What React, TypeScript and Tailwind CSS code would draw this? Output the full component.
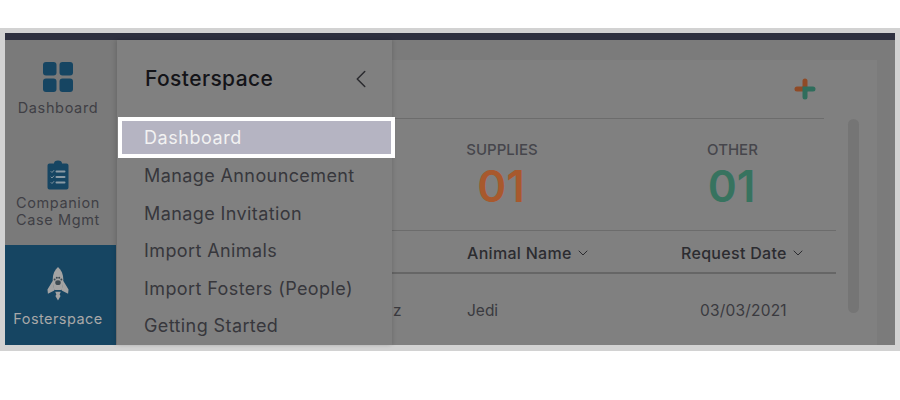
import { ChevronDown, ChevronLeft } from 'lucide-react';

const FONT = 'font-["Inter","Noto_Sans",sans-serif]';

const MENU = ['Manage Announcement', 'Manage Invitation', 'Import Animals', 'Import Fosters (People)', 'Getting Started'];

function GridIcon() {
  return (
    <svg width="30" height="30" viewBox="0 0 30 30" fill="#164562">
      <rect x="0" y="0" width="13.5" height="13.5" rx="3" />
      <rect x="16.5" y="0" width="13.5" height="13.5" rx="3" />
      <rect x="0" y="16.5" width="13.5" height="13.5" rx="3" />
      <rect x="16.5" y="16.5" width="13.5" height="13.5" rx="3" />
    </svg>
  );
}

function ClipboardIcon() {
  return (
    <svg width="22" height="30" viewBox="0 0 22 30">
      <path d="M2.5 3.5h4.5a4 3 0 0 1 8 0h4.5a2 2 0 0 1 2 2v22a2 2 0 0 1-2 2h-17a2 2 0 0 1-2-2v-22a2 2 0 0 1 2-2z" fill="#164562" />
      <g stroke="#8a9aa4" strokeLinecap="round">
        <path d="M9.5 11.5h8M9.5 17h8M9.5 22.5h8" strokeWidth="2" />
        <path d="M4 11.5l1 1 1.8-2M4 17l1 1 1.8-2M4 22.5l1 1 1.8-2" strokeWidth="0.9" fill="none" />
      </g>
    </svg>
  );
}

function RocketIcon() {
  return (
    <svg width="22" height="36" viewBox="0 0 24 37">
      <path d="M12 0c3.6 3 5.8 8 5.8 13.5 0 4-.7 8-1.8 11.5H8C6.900 21.500 6.200 17.500 6.200 13.500 6.200 8 8.400 3 12 0z" fill="#a3a3a3" />
      <path d="M6.300 15L0.500 24.500 1 29l7-3.500zM17.700 15l5.800 9.500L23 29l-7-3.500z" fill="#a3a3a3" />
      <path d="M9 27h6l-1.200 3 1 1.500-2.800 5-2.800-5 1-1.500z" fill="#a3a3a3" />
      <g fill="#3d4a52">
        <ellipse cx="12" cy="17" rx="3" ry="2.500" />
        <circle cx="8.300" cy="13.700" r="1.100" />
        <circle cx="10.700" cy="11.800" r="1.100" />
        <circle cx="13.300" cy="11.800" r="1.100" />
        <circle cx="15.700" cy="13.700" r="1.100" />
      </g>
    </svg>
  );
}

function PlusIcon() {
  return (
    <svg width="22" height="22" viewBox="0 0 22 22" fill="none" strokeWidth="5" strokeLinecap="round">
      <path d="M3 11h8V3" stroke="#8f4a26" />
      <path d="M19 11h-8v8" stroke="#2f6d5c" />
    </svg>
  );
}

export default function App() {
  return (
    <div className={`h-[400px] w-[900px] overflow-hidden bg-white pt-[28px] ${FONT}`}>
      <div className="flex h-[323px] flex-col border-x-[5px] border-t-[5px] border-b-[6px] border-[#d2d2d2] bg-[#7b7b7b]">
        <div className="h-[7px] shrink-0 bg-[#2e303f]" />
        <div className="flex min-h-0 flex-1">
          {/* icon rail */}
          <div className="flex w-[112px] shrink-0 flex-col bg-[#7a7a7a] text-center text-[14.500px] leading-[17px] text-[#3f3f45]">
            <div className="flex h-[100px] flex-col items-center pr-[6px] pt-[22px]">
              <GridIcon />
              <span className="mt-[7px] tracking-[0.65px]">Dashboard</span>
            </div>
            <div className="flex h-[105px] flex-col items-center pr-[6px] pt-[20px]">
              <ClipboardIcon />
              <span className="mt-[4px] tracking-[0.6px]">Companion<br />Case Mgmt</span>
            </div>
            <div className="mr-[1px] flex flex-1 flex-col items-center bg-[#164562] pr-[5px] pt-[21px] text-[#a8a8a8]">
              <RocketIcon />
              <span className="mt-[8px] tracking-[0.45px]">Fosterspace</span>
            </div>
          </div>

          {/* flyout menu */}
          <div className="relative z-10 w-[275px] shrink-0 bg-[#808080] shadow-[-2px_0_4px_rgba(0,0,0,0.12),2px_0_3px_rgba(0,0,0,0.08)]">
            <div className="flex h-[77px] items-center justify-between pl-[28px] pr-[16px]">
              <span className="text-[21px] font-medium tracking-[0.4px] text-[#141418]">Fosterspace</span>
              <ChevronLeft size={30} strokeWidth={1.2} color="#2a2a2e" />
            </div>
            <div className="-mr-[3px] ml-[1px] flex h-[41px] items-center border-[4px] border-white bg-[#b5b4c2] pl-[22px] text-[18px] tracking-[0.55px] text-[#f2f2f2]">
              Dashboard
            </div>
            <div className="-mt-[1px]">
              {MENU.map((m) => (
                <div key={m} className="flex h-[37.500px] items-center pl-[27px] text-[18px] tracking-[0.4px] text-[#37373c]">
                  {m}
                </div>
              ))}
            </div>
          </div>

          {/* page behind the overlay */}
          <div className="relative min-w-0 flex-1 overflow-hidden pr-[18px] pt-[20px]">
            <div className="h-full bg-[#808080]">
              <div className="flex h-[59px] w-[432px] items-center justify-end border-b border-[#6c6c6c] pr-[8px]">
                <PlusIcon />
              </div>
              <div className="flex h-[112px] w-[444px] border-b border-[#6c6c6c] pt-[22px] text-center">
                <div className="w-[218px] pl-[5px]">
                  <div className="text-[15px] font-medium leading-[18px] text-[#46464c]">SUPPLIES</div>
                  <div className="mt-[2px] pr-[2px] text-[44px] font-semibold leading-[50px] text-[#a8592d]">01</div>
                </div>
                <div className="w-[232px] pl-[22px]">
                  <div className="text-[15px] font-medium leading-[18px] text-[#46464c]">OTHER</div>
                  <div className="mt-[2px] pr-[2px] text-[44px] font-semibold leading-[50px] text-[#37735f]">01</div>
                </div>
              </div>
              <div className="flex h-[43px] w-[444px] items-center border-b-2 border-[#666666] pt-[2px] text-[16px] font-medium tracking-[0.3px] text-[#2c2c30]">
                <div className="flex w-[289px] items-center gap-[3px] pl-[75px]">
                  Animal Name <ChevronDown size={16} strokeWidth={1.5} />
                </div>
                <div className="flex items-center gap-[3px]">
                  Request Date <ChevronDown size={16} strokeWidth={1.5} />
                </div>
              </div>
              <div className="flex h-[70px] w-[444px] items-center pt-[4px] text-[15.500px] text-[#3a3a3f]">
                <span className="w-[75px] pl-[1px]">z</span>
                <span className="w-[233px]">Jedi</span>
                <span className="tracking-[0.2px]">03/03/2021</span>
              </div>
            </div>
            <div className="absolute left-[456px] top-[79px] h-[194px] w-[11px] rounded-full bg-[#757575]" />
          </div>
        </div>
      </div>
    </div>
  );
}
